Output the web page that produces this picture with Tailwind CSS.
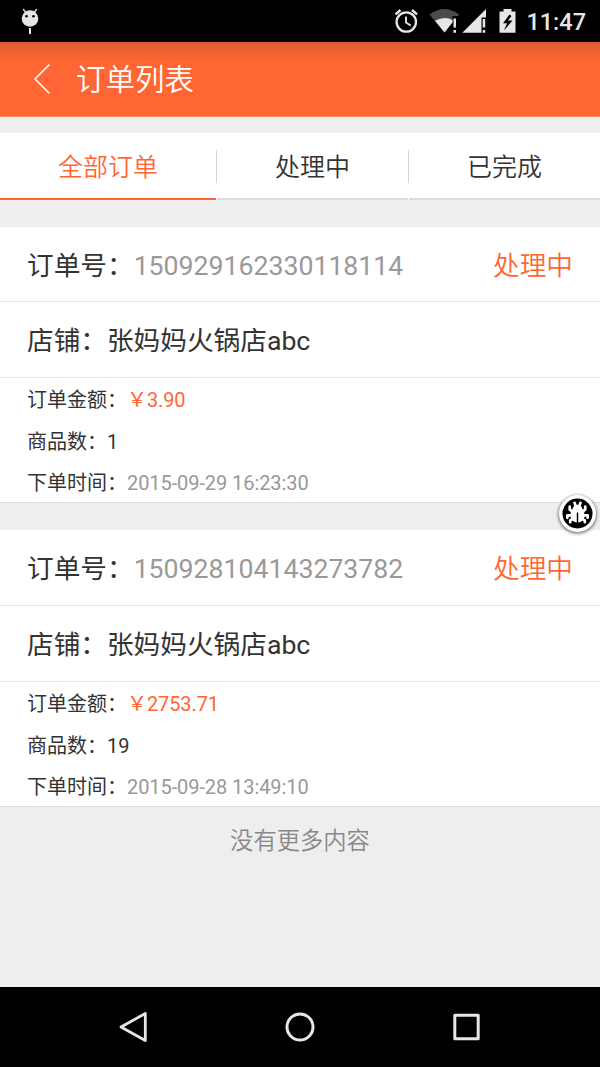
<!DOCTYPE html>
<html lang="zh-CN">
<head>
<meta charset="utf-8">
<title>订单列表</title>
<script src="https://cdn.jsdelivr.net/npm/@tailwindcss/browser@4"></script>
</head>
<body class="relative flex h-[1067px] w-[600px] flex-col overflow-hidden bg-[#eeeeee] font-[Roboto,'Noto_Sans_CJK_SC',sans-serif] text-[#333333]">
  <div class="flex h-[42px] shrink-0 items-center justify-between bg-black pr-[14px] pl-[21px]">
    <svg class="h-[42px] w-[18px]" viewBox="0 0 18 42">
      <path d="M2.5 9.5l3 4M15.500 9.500l-3 4" stroke="#e6e6e6" stroke-width="1.300" stroke-linecap="round"/>
      <circle cx="9" cy="18.500" r="8.300" fill="#e6e6e6"/>
      <circle cx="5.500" cy="16.300" r="1.300"/><circle cx="12.500" cy="16.300" r="1.300"/>
      <path d="M9 28v6" stroke="#e6e6e6" stroke-width="2"/>
    </svg>
    <div class="flex items-center">
      <svg class="h-[42px] w-[132px]" viewBox="394 0 132 42" fill="none">
        <g stroke="#e6e6e6">
          <circle cx="406.300" cy="22" r="9.700" stroke-width="2.300"/>
          <path d="M406 16.500v6l4.700 3" stroke-width="1.900"/>
          <path d="M400.500 10l-5 4.300M412 10l5 4.300" stroke-width="2.400"/>
        </g>
        <path d="M429.500 14.500Q444.500 3.500 459 14.500L458 16H452.500V21L444.500 32.500Z" fill="#4b4b4b"/>
        <path d="M435 20.800Q444.500 15.500 452.500 20V22.500L444.500 32.500Z" fill="#e6e6e6"/>
        <path d="M453.500 18.500h2.500v9h-2.500zM453.500 30h2.500v2.700h-2.500z" fill="#e6e6e6"/>
        <path d="M486 9v8.500h-4.500v15.200H462.300z" fill="#e6e6e6"/>
        <path d="M482.700 19h2.500v8.500h-2.500zM482.700 30h2.500v2.700h-2.500z" fill="#e6e6e6"/>
        <path d="M503.500 9h8v2.500h4v21.200h-16V11.500h4z" fill="#e6e6e6"/>
        <path d="M509.500 14.500l-6.500 8.700h4l-3 7.300 8.500-10h-4.500l3.500-4.500z" fill="#000"/>
      </svg>
      <span class="pt-[2px] text-[23.5px] leading-[40px] font-medium text-[#e6e6e6]">11:47</span>
    </div>
  </div>

  <header class="flex h-[75px] shrink-0 items-center border-b border-[#f98a62] bg-linear-to-b from-[#dc5a2f] via-[#ff6633] via-25% to-[#ff6633] pl-[33px] text-white">
    <svg class="h-[32px] w-[18px]" viewBox="0 0 18 32" fill="none" stroke="#fff" stroke-width="1.500"><path d="M16.500 1.500L2 16l14.500 14.500"/></svg>
    <h1 class="ml-[25px] pt-1 text-[29.5px] leading-none font-[350]">订单列表</h1>
  </header>

  <nav class="mt-4 flex h-[67px] shrink-0 bg-white text-[25px]">
    <div class="flex w-[216px] items-center justify-center border-b-2 border-[#ff6633] pt-1 font-[350] text-[#ff6633]">全部订单</div>
    <div class="mt-[17px] h-[33px] w-px bg-[#d4d4d4]"></div>
    <div class="flex w-[191px] items-center justify-center border-b-2 border-[#dddddd] pt-1 font-[350]">处理中</div>
    <div class="mt-[17px] h-[33px] w-px bg-[#d4d4d4]"></div>
    <div class="flex flex-1 items-center justify-center border-b-2 border-[#dddddd] pt-1 font-[350]">已完成</div>
  </nav>

  <main class="mt-[27px] flex flex-col gap-[27px]">
    <article class="flex h-[276px] flex-col border-b border-[#dddddd] bg-white">
      <div class="flex h-[75px] shrink-0 items-center justify-between border-b border-[#e6e6e6] px-[27px] pt-[3px] text-[26.67px]"><p>订单号：<span class="text-[#999999]">150929162330118114</span></p><span class="font-[350] text-[#ff6633]">处理中</span></div>
      <div class="flex h-[76px] shrink-0 items-center border-b border-[#e6e6e6] px-[27px] pt-[2px] text-[26.67px]">店铺：张妈妈火锅店abc</div>
      <div class="flex flex-col px-[27px] pt-[2px] text-[20px] leading-[41.6px]">
        <p>订单金额：<span class="tracking-[-0.1px] text-[#ff6633]">￥3.90</span></p>
        <p>商品数：1</p>
        <p>下单时间：<span class="tracking-[-0.08px] text-[#999999]">2015-09-29 16:23:30</span></p>
      </div>
    </article>
    <article class="flex h-[277px] flex-col border-b border-[#dddddd] bg-white">
      <div class="flex h-[76px] shrink-0 items-center justify-between border-b border-[#e6e6e6] px-[27px] pt-[3px] text-[26.67px]"><p>订单号：<span class="text-[#999999]">150928104143273782</span></p><span class="font-[350] text-[#ff6633]">处理中</span></div>
      <div class="flex h-[76px] shrink-0 items-center border-b border-[#e6e6e6] px-[27px] pt-[2px] text-[26.67px]">店铺：张妈妈火锅店abc</div>
      <div class="flex flex-col px-[27px] pt-[2px] text-[20px] leading-[41.6px]">
        <p>订单金额：<span class="tracking-[-0.1px] text-[#ff6633]">￥2753.71</span></p>
        <p>商品数：19</p>
        <p>下单时间：<span class="tracking-[-0.08px] text-[#999999]">2015-09-28 13:49:10</span></p>
      </div>
    </article>
  </main>
  <p class="mt-[14px] text-center text-[23.3px] leading-[40px] font-[350] text-[#888888]">没有更多内容</p>

  <footer class="mt-auto flex h-[80px] shrink-0 items-center justify-between bg-black px-[117px]">
    <svg class="h-[34px] w-[32px]" viewBox="0 0 32 34" fill="none" stroke="#e6e6e6" stroke-width="2.800" stroke-linejoin="round"><path d="M28.300 3.500v27L4 17z"/></svg>
    <svg class="size-[32px]" viewBox="0 0 32 32" fill="none" stroke="#e6e6e6" stroke-width="3"><circle cx="16" cy="16" r="13"/></svg>
    <svg class="size-[32px]" viewBox="0 0 32 32" fill="none" stroke="#e6e6e6" stroke-width="3" stroke-linejoin="round"><path d="M3.800 4.300h23.400v23.400H3.800z"/></svg>
  </footer>

  <div class="absolute top-[495px] left-[559px] flex size-[37px] items-center justify-center rounded-full bg-white shadow-[0_1px_3px_1px_rgba(0,0,0,0.45)]">
    <svg class="size-[31px]" viewBox="0 0 32 32">
      <circle cx="16" cy="16" r="15.500"/>
      <g stroke="#fff" stroke-width="2.800" fill="none" stroke-linecap="round" stroke-linejoin="round">
        <path d="M11 14L8 12V9M21 14l3-2V9M10 18H5.500V20.500M22 18h4.500V20.500M11 22l-2.500 1V25M21 22l2.500 1V25M14 8l-1-3M18 8l1-3"/>
      </g>
      <path d="M11 11q1-4 5-4t5 4l2 2.500v7q-1 4-7 5-6-1-7-5v-7z" fill="#fff"/>
      <path d="M16 15v11" stroke="#000" stroke-width="1.500"/>
    </svg>
  </div>
</body>
</html>
